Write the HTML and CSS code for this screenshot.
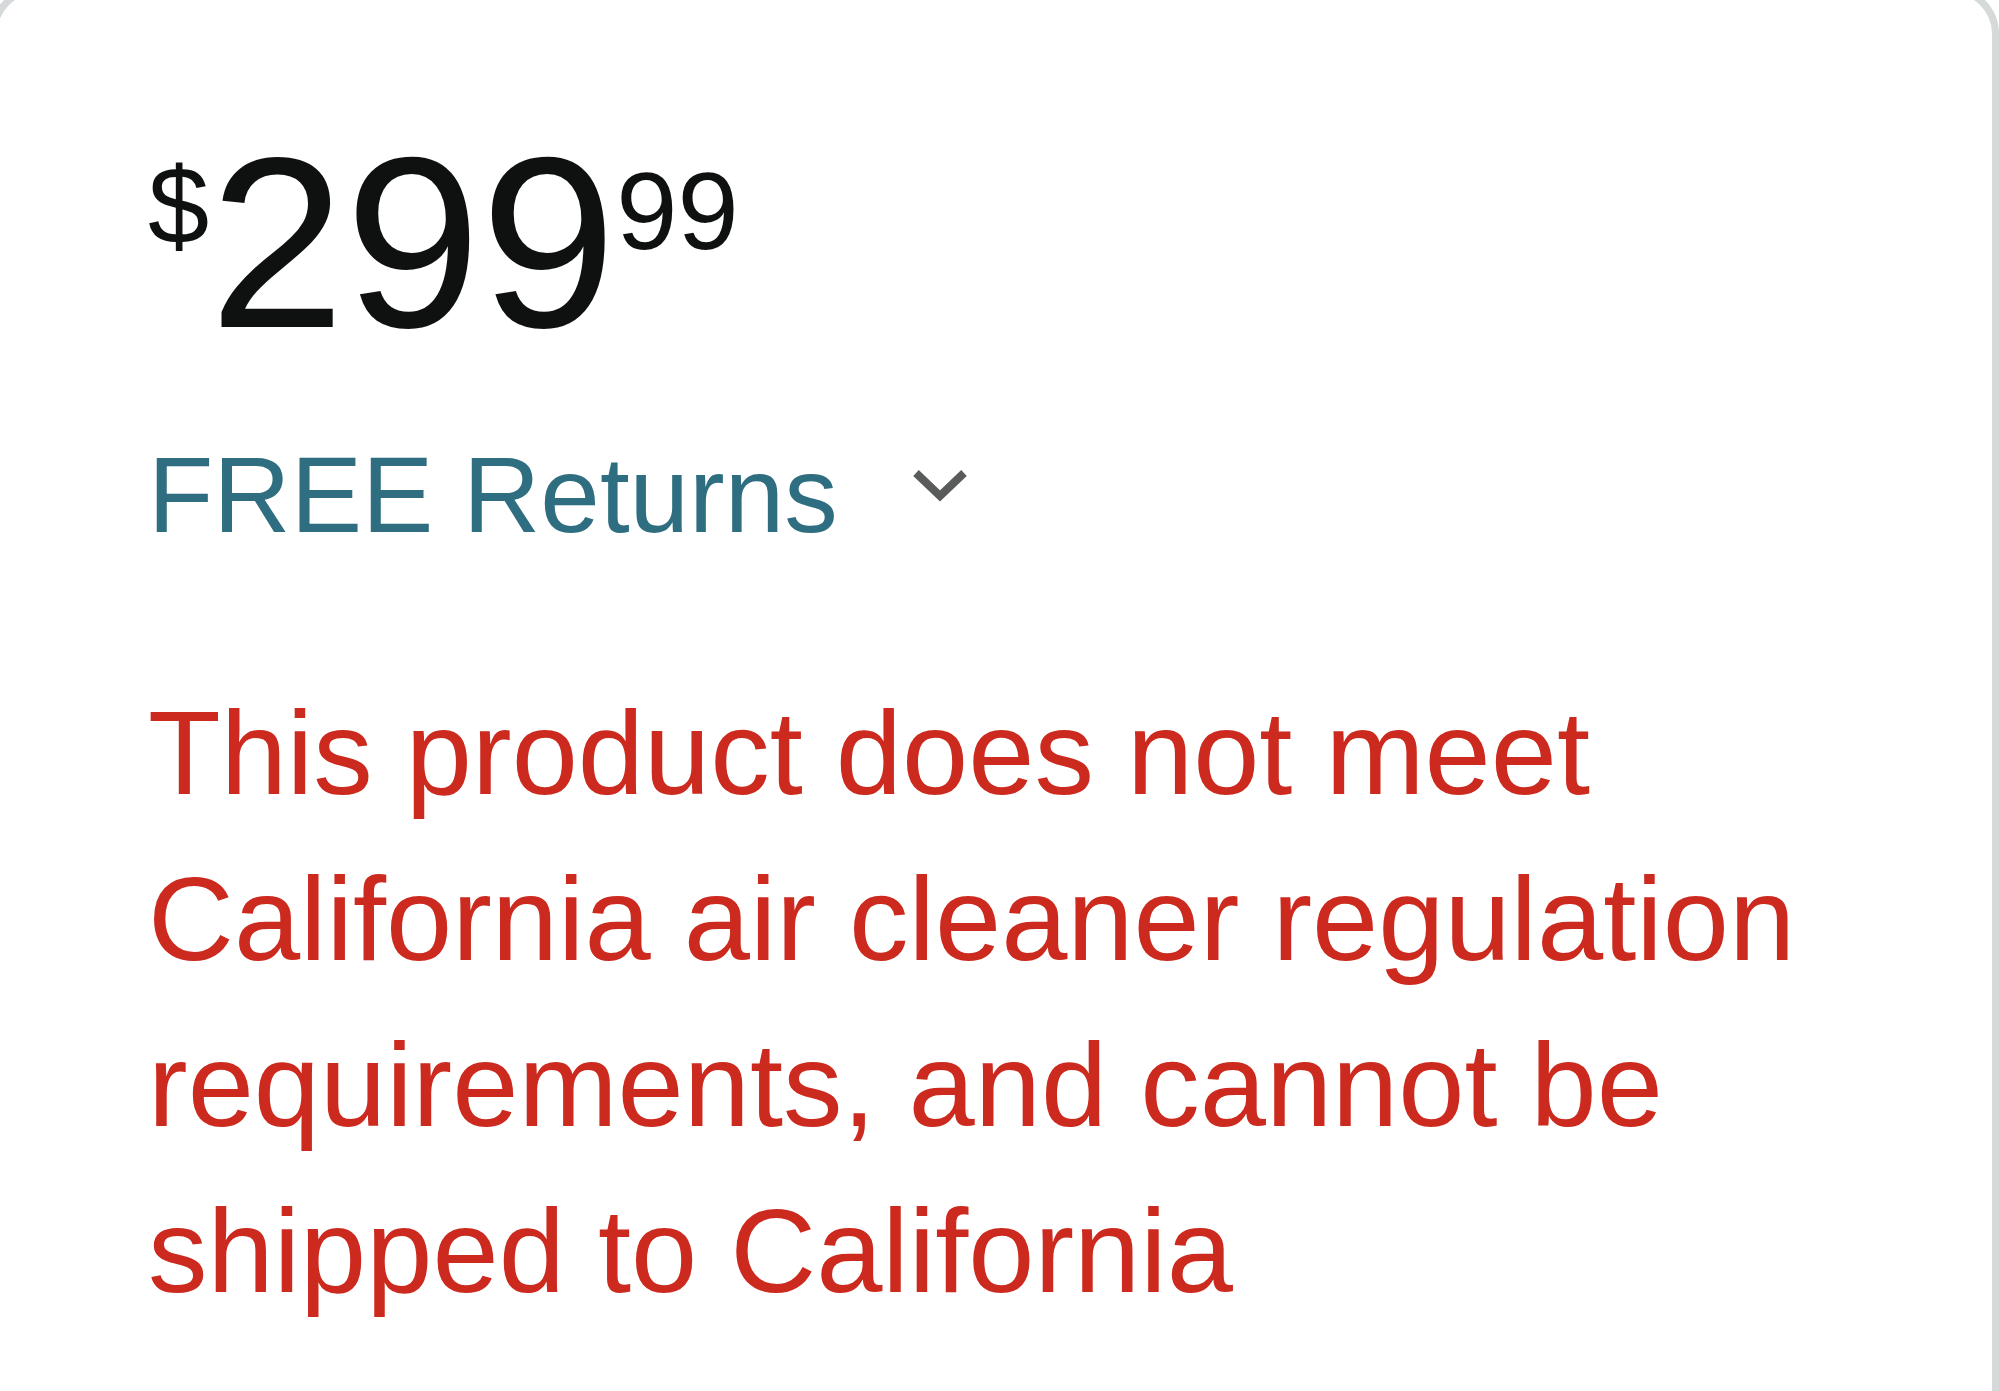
FILE: index.html
```html
<!DOCTYPE html>
<html lang="en">
<head>
<meta charset="utf-8">
<title>Price box</title>
<link rel="stylesheet" href="styles.css">
</head>
<body>
<div class="card">
  <div class="price">
    <span class="sym">$</span><span class="whole">299</span><span class="frac">99</span>
  </div>
  <div class="returns">
    <span class="returns-text">FREE Returns</span>
    <svg class="chevron" width="56" height="32" viewBox="0 0 56 32" aria-hidden="true">
      <polyline points="4,4 28,27 52,4" fill="none" stroke="currentColor" stroke-width="8" stroke-linecap="butt" stroke-linejoin="miter"/>
    </svg>
  </div>
  <p class="warning">This product does not meet California air cleaner regulation requirements, and cannot be shipped to California</p>
</div>
</body>
</html>
```

FILE: styles.css
```css
html, body {
  margin: 0;
  padding: 0;
  height: 100%;
  overflow: hidden;
  background: #ffffff;
}

body {
  font-family: "Liberation Sans", Arial, sans-serif;
}

.card {
  box-sizing: border-box;
  width: 2009px;
  min-height: 1500px;
  margin: -14px 0 0 -10px;
  border: 7px solid #d5d9d9;
  border-radius: 48px;
  padding: 128px 151px 0 151px;
  background: #ffffff;
}

.price {
  display: flex;
  align-items: flex-start;
  color: #0f1111;
}

.sym {
  font-size: 110px;
  line-height: 1;
  margin-top: 30px;
}

.whole {
  font-size: 244px;
  line-height: 1;
}

.frac {
  font-size: 110px;
  line-height: 1;
  margin-top: 35px;
}

.returns {
  display: flex;
  align-items: center;
  margin-top: 55px;
  font-size: 107px;
  line-height: 150px;
  color: #2f6e80;
}

.chevron {
  margin-left: 74px;
  margin-bottom: 20px;
  color: #5a5c5c;
  overflow: visible;
}

.warning {
  margin: 100px 0 0 0;
  font-size: 119px;
  line-height: 166px;
  color: #cc2a1e;
}
```
